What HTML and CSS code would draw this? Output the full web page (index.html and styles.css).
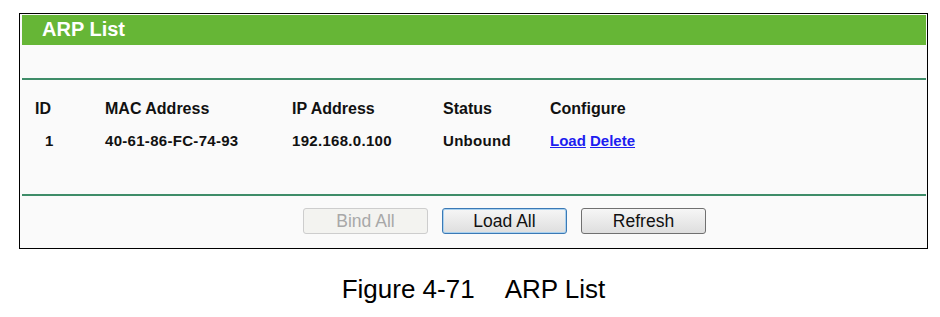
FILE: index.html
```html
<!DOCTYPE html>
<html lang="en">
<head>
  <meta charset="UTF-8">
  <title>ARP List</title>
  <link rel="stylesheet" href="styles.css">
</head>
<body>

  <div class="panel">
    <div class="panel-title">ARP List</div>

    <div class="arp-table">
      <div class="row head">
        <div class="col-id">ID</div>
        <div>MAC Address</div>
        <div>IP Address</div>
        <div>Status</div>
        <div>Configure</div>
      </div>
      <div class="row">
        <div class="col-id num">1</div>
        <div>40-61-86-FC-74-93</div>
        <div>192.168.0.100</div>
        <div>Unbound</div>
        <div class="links"><a href="#">Load</a> <a href="#">Delete</a></div>
      </div>
    </div>

    <div class="buttons">
      <button class="btn" disabled>Bind All</button>
      <button class="btn focused">Load All</button>
      <button class="btn">Refresh</button>
    </div>
  </div>

  <div class="caption">Figure 4-71<span class="gap"></span>ARP List</div>

</body>
</html>
```

FILE: styles.css
```css
* {
  margin: 0;
  padding: 0;
  box-sizing: border-box;
}

body {
  background: #fff;
  font-family: "Liberation Sans", Arial, sans-serif;
  color: #111;
  padding: 13px 0 0 19px;
}

.panel {
  width: 909px;
  border: 1px solid #000;
  background: #fafafa;
  padding: 1px 1px 14px 2px;
}

.panel-title {
  height: 30px;
  line-height: 29px;
  background: #66b636;
  color: #fff;
  font-size: 20px;
  font-weight: bold;
  padding-left: 20px;
}

.arp-table {
  margin-top: 33px;
  border-top: 2px solid #3e8c68;
  border-bottom: 2px solid #3e8c68;
  padding: 17px 0 41px 13px;
}

.row {
  display: grid;
  grid-template-columns: 70px 187px 151px 107px 1fr;
  height: 24px;
  line-height: 24px;
  font-size: 15px;
  letter-spacing: 0.3px;
  font-weight: bold;
}

.row + .row {
  margin-top: 8px;
}

.row.head {
  font-size: 16px;
  letter-spacing: 0;
}

.num {
  padding-left: 10px;
}

.links {
  letter-spacing: 0;
}

.links a {
  color: #1d1df0;
  text-decoration: underline;
}

.buttons {
  display: flex;
  gap: 14px;
  padding: 12px 0 0 281px;
}

.btn {
  width: 125px;
  height: 26px;
  font-family: "Liberation Sans", Arial, sans-serif;
  font-size: 17.5px;
  color: #111;
  border: 1px solid #707070;
  border-radius: 3px;
  background: linear-gradient(#f6f6f6, #dedede);
}

.btn.focused {
  border-color: #3b79b5;
  box-shadow: inset 0 0 0 1px #a9d1ef;
}

.btn:disabled {
  color: #a8a8a8;
  border-color: #cdcdcd;
  background: #f3f3f0;
}

.caption {
  width: 909px;
  margin-top: 25px;
  text-align: center;
  font-size: 26px;
  line-height: 30px;
  color: #000;
}

.gap {
  display: inline-block;
  width: 30px;
}
```
